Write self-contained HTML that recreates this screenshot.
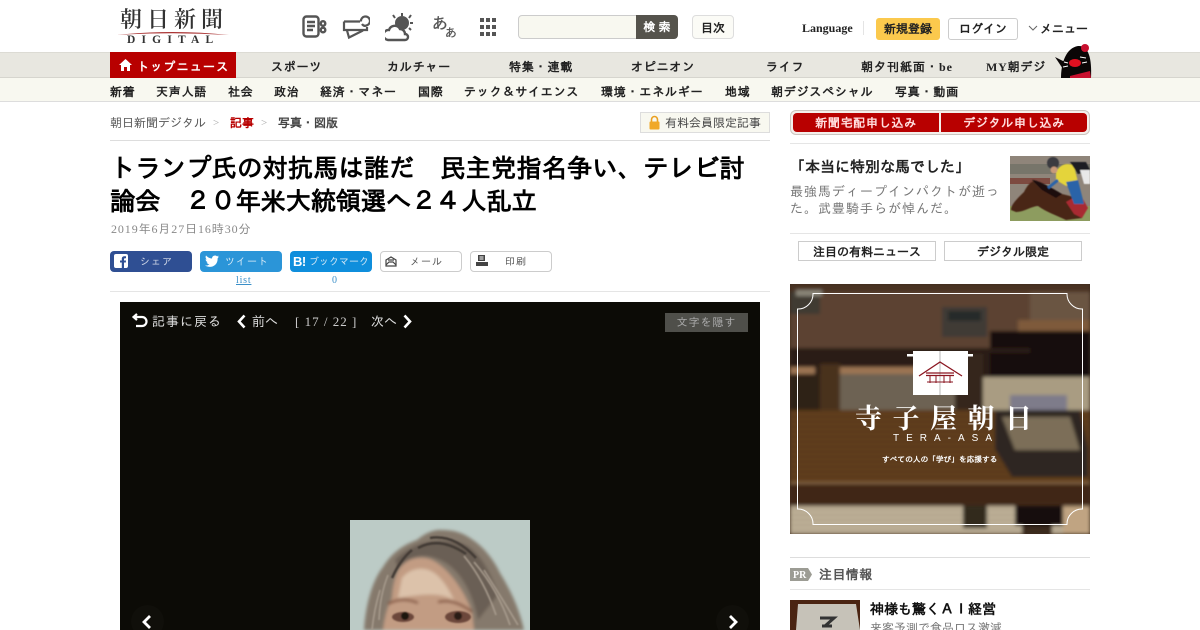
<!DOCTYPE html>
<html lang="ja"><head><meta charset="utf-8"><title>朝日新聞デジタル</title>
<style>
*{margin:0;padding:0;box-sizing:border-box}
html,body{width:1200px;height:630px;overflow:hidden;background:#fff}
body{position:relative;font-family:"Liberation Serif","IPAGothic",serif;color:#222}
.a{position:absolute;white-space:nowrap}
.n{font-size:12px;font-weight:bold;letter-spacing:.8px;color:#222;line-height:14px}
.s{position:absolute;height:21px;border-radius:4px;font-size:10px;line-height:21px;white-space:nowrap;letter-spacing:1px}
.s span{top:1px}
svg{position:absolute;display:block}
</style></head><body>

<!-- logo -->
<div class="a" style="left:120px;top:5px;font:600 22px/28px 'Noto Serif CJK SC',serif;letter-spacing:5px;color:#333">朝日新聞</div>
<svg style="left:116px;top:30px" width="114" height="6"><path d="M1 5Q57-1 113 5Q57 1.500 1 5Z" fill="#a33"/></svg>
<div class="a" style="left:127px;top:34px;font:bold 11.500px/12px 'Liberation Serif',serif;letter-spacing:6.200px;color:#333">DIGITAL</div>

<!-- icons -->
<svg style="left:302px;top:15px" width="26" height="24" fill="none" stroke="#555" stroke-width="2.400"><rect x="1.500" y="1.500" width="15" height="20" rx="3"/><path d="M5 7h8M5 11h8M5 15h6" /><circle cx="21" cy="8.500" r="2.300"/><circle cx="21" cy="15" r="2.300"/></svg>
<svg style="left:342px;top:15px" width="28" height="25" fill="none" stroke="#555" stroke-width="2.200"><path d="M2 6.500H18M25 12V15L2 15V6.500M19 6.500A4.500 4.500 0 1 1 25.500 10Q22 12 20 9"/><path d="M5 15.500l2 7 14-7"/></svg>
<svg style="left:385px;top:12px" width="30" height="30" fill="none" stroke="#555" stroke-width="2"><circle cx="17" cy="11" r="6" fill="#555"/><path d="M17 1v3M8 3l2 3M26 3l-2 3M28 11h-3M26 18l-2-2"/><path d="M3 28a5 5 0 0 1 1-10 6 6 0 0 1 11-1 5 5 0 0 1 5 5 3 3 0 0 1 0 6Z" fill="#fff" stroke-width="2.400"/></svg>
<div class="a" style="left:432px;top:15px;font-size:16px;line-height:20px;color:#555;-webkit-text-stroke:.3px #555">あ</div>
<div class="a" style="left:445px;top:26px;font-size:12px;line-height:14px;color:#555;-webkit-text-stroke:.3px #555">あ</div>
<svg style="left:480px;top:18px" width="16" height="18" fill="#555"><path d="M0 0h4v4H0zM6 0h4v4H6zM12 0h4v4h-4zM0 7h4v4H0zM6 7h4v4H6zM12 7h4v4h-4zM0 14h4v4H0zM6 14h4v4H6zM12 14h4v4h-4z"/></svg>

<!-- search -->
<div class="a" style="left:518px;top:15px;width:120px;height:24px;background:#f8f8f0;border:1px solid #ccc;border-radius:4px 0 0 4px"></div>
<div class="a" style="left:636px;top:15px;width:42px;height:24px;background:#55534c;border-radius:0 4px 4px 0;color:#fff;font-size:12px;font-weight:bold;line-height:24px;text-align:center;letter-spacing:3px;padding-left:3px">検索</div>
<div class="a" style="left:692px;top:15px;width:42px;height:24px;background:#fbfbf6;border:1px solid #ddd;border-radius:4px;font-size:12px;font-weight:bold;line-height:24px;text-align:center">目次</div>
<div class="a" style="left:802px;top:21px;font-size:12px;font-weight:bold;line-height:14px">Language</div>
<div class="a" style="left:863px;top:21px;width:1px;height:14px;background:#e4e4e4"></div>
<div class="a" style="left:876px;top:18px;width:64px;height:22px;background:#fbc94d;border-radius:3px;font-size:12px;font-weight:bold;line-height:23px;text-align:center">新規登録</div>
<div class="a" style="left:948px;top:18px;width:70px;height:22px;border:1px solid #ccc;border-radius:3px;font-size:12px;font-weight:bold;line-height:21px;text-align:center">ログイン</div>
<svg style="left:1028px;top:25px" width="10" height="7" fill="none" stroke="#666"><path d="M1 1l4 4 4-4"/></svg>
<div class="a" style="left:1040px;top:22px;font-size:12px;font-weight:bold;line-height:14px">メニュー</div>

<!-- nav 1 -->
<div class="a" style="left:0;top:52px;width:1200px;height:26px;background:#e8e7e0;border-top:1px solid #dcdbd4;border-bottom:1px solid #d6d5ce"></div>
<div class="a" style="left:110px;top:52px;width:126px;height:26px;background:#b80000"></div>
<svg style="left:119px;top:59px" width="13" height="12" fill="#fff"><path d="M6.500 0L13 6h-2v6H8V8H5v4H2V6H0Z"/></svg>
<div class="a n" style="left:137px;top:60px;color:#fff;letter-spacing:1.200px">トップニュース</div>
<div class="a n" style="left:271px;top:60px">スポーツ</div>
<div class="a n" style="left:387px;top:60px">カルチャー</div>
<div class="a n" style="left:509px;top:60px">特集・連載</div>
<div class="a n" style="left:631px;top:60px">オピニオン</div>
<div class="a n" style="left:766px;top:60px">ライフ</div>
<div class="a n" style="left:861px;top:60px;letter-spacing:1px">朝夕刊紙面・be</div>
<div class="a n" style="left:986px;top:60px;letter-spacing:.8px">MY朝デジ</div>
<svg style="left:1054px;top:43px" width="38" height="35"><path d="M7 35C7 20 12 5 24 3 34 2 38 14 37 35Z" fill="#0a0606"/><path d="M1 14l10 5-2 7z" fill="#0a0606"/><circle cx="31" cy="5" r="4" fill="#c8102e"/><ellipse cx="21" cy="20" rx="6" ry="4" fill="#e01020"/><path d="M16 33l20-5 1 7H16z" fill="#c8102e"/><path d="M26 14l6 1M10 19l4 1M28 20l5-1M9 24l5-1" stroke="#fff" stroke-width="1"/></svg>

<!-- nav 2 -->
<div class="a" style="left:0;top:78px;width:1200px;height:24px;background:#f8f8f0;border-bottom:1px solid #ddd"></div>
<div class="a n" style="left:110px;top:85px">新着</div>
<div class="a n" style="left:156px;top:85px">天声人語</div>
<div class="a n" style="left:228px;top:85px">社会</div>
<div class="a n" style="left:274px;top:85px">政治</div>
<div class="a n" style="left:320px;top:85px">経済・マネー</div>
<div class="a n" style="left:418px;top:85px">国際</div>
<div class="a n" style="left:464px;top:85px">テック＆サイエンス</div>
<div class="a n" style="left:601px;top:85px">環境・エネルギー</div>
<div class="a n" style="left:725px;top:85px">地域</div>
<div class="a n" style="left:771px;top:85px">朝デジスペシャル</div>
<div class="a n" style="left:895px;top:85px">写真・動画</div>

<!-- breadcrumbs -->
<div class="a" style="left:110px;top:115px;font-size:12px;line-height:16px;color:#555">朝日新聞デジタル</div>
<div class="a" style="left:213px;top:115px;font-size:11px;line-height:16px;color:#aaa">&gt;</div>
<div class="a" style="left:230px;top:115px;font-size:12px;line-height:16px;color:#b80000;font-weight:bold">記事</div>
<div class="a" style="left:261px;top:115px;font-size:11px;line-height:16px;color:#aaa">&gt;</div>
<div class="a" style="left:278px;top:115px;font-size:12px;line-height:16px;color:#444;font-weight:bold">写真・図版</div>
<div class="a" style="left:640px;top:112px;width:130px;height:21px;background:#f8f8f0;border:1px solid #ddd"></div>
<svg style="left:648px;top:115px" width="13" height="15"><path d="M3.500 7V4.500a3 3 0 0 1 6 0V7" fill="none" stroke="#eaa020" stroke-width="1.600"/><rect x="1.500" y="6.500" width="10" height="8" rx="1" fill="#f0a828"/></svg>
<div class="a" style="left:665px;top:115px;font-size:12px;line-height:16px;color:#444">有料会員限定記事</div>
<div class="a" style="left:110px;top:140px;width:660px;height:1px;background:#ddd"></div>

<!-- title -->
<div class="a" style="left:110px;top:153px;width:660px;font:bold 25.400px/33px 'Liberation Sans','IPAGothic',sans-serif;color:#000;white-space:nowrap">トランプ氏の対抗馬は誰だ　民主党指名争い、テレビ討<br><span style="letter-spacing:-.3px">論会　２０年米大統領選へ２４人乱立</span></div>
<div class="a" style="left:111px;top:221px;font-size:12px;line-height:16px;color:#888;letter-spacing:.9px">2019年6月27日16時30分</div>

<!-- share -->
<div class="s" style="left:110px;top:251px;width:82px;background:#2f4f93;color:#cfd6e6"><span class="a" style="left:30px">シェア</span></div>
<svg style="left:114px;top:254px" width="15" height="15"><rect width="14" height="14" rx="2" fill="#fff"/><path d="M10 14V8.500h1.800L12 6.500H10V5.200c0-.6.300-1 1-1h1V2.300H10.400C8.500 2.300 7.800 3.500 7.800 5V6.500H6V8.500H7.800V14Z" fill="#2f4f93"/></svg>
<div class="s" style="left:200px;top:251px;width:82px;background:#2b95d8;color:#d5e8f5"><span class="a" style="left:25px">ツイート</span></div>
<svg style="left:205px;top:255px" width="14" height="12"><path d="M14 1.500l-1.600.4 1.200-1.400-1.700.7A3 3 0 0 0 7 3.500C4.500 3.400 2.500 2.200 1 .5c-.8 1.400-.4 3 .9 4L.6 4.200c0 1.500 1 2.600 2.400 3l-1.300 0C2.100 8.400 3.200 9.200 4.500 9.200A6 6 0 0 1 0 10.500C6 14 13 10.500 12.600 3.400Z" fill="#fff"/></svg>
<div class="a" style="left:236px;top:275px;font-size:10px;line-height:12px;color:#3a8fc8;text-decoration:underline;letter-spacing:.8px">list</div>
<div class="s" style="left:290px;top:251px;width:82px;background:#0f8edc;color:#d5e8f5"><span class="a" style="left:19px;letter-spacing:0">ブックマーク</span></div>
<div class="a" style="left:293px;top:255px;font:bold 13px/13px 'Liberation Sans',sans-serif;color:#fff;letter-spacing:-.5px">B!</div>
<div class="a" style="left:332px;top:275px;font-size:10px;line-height:12px;color:#3a8fc8">0</div>
<div class="s" style="left:380px;top:251px;width:82px;background:#fff;border:1px solid #ccc;color:#555"><span class="a" style="left:29px;top:0">メール</span></div>
<svg style="left:385px;top:256px" width="12" height="11" fill="#fff" stroke="#444" stroke-width="1.200"><path d="M1 4L6 1l5 3v6H1Z"/><path d="M1 9l3-3h4l3 3M3 4h6"/></svg>
<div class="s" style="left:470px;top:251px;width:82px;background:#fff;border:1px solid #ccc;color:#555"><span class="a" style="left:34px;top:0">印刷</span></div>
<svg style="left:476px;top:255px" width="12" height="12" fill="#444"><path d="M2 0h7v6H2z"/><path d="M0 7h12v4H0z"/><path d="M3.500 1.500h4v1h-4zM3.500 3.500h4v1h-4z" fill="#fff"/></svg>
<div class="a" style="left:110px;top:291px;width:660px;height:1px;background:#e5e5e5"></div>

<!-- photo panel -->
<div class="a" style="left:120px;top:302px;width:640px;height:328px;background:#0c0b06"></div>
<svg style="left:132px;top:313px" width="16" height="15" fill="none" stroke="#fff" stroke-width="2.200"><path d="M5 1L1.500 4 5 7M2 4h8a4 4 0 0 1 0 9H4"/></svg>
<div class="a" style="left:152px;top:313px;font-size:13px;line-height:17px;color:#ddd;letter-spacing:1px">記事に戻る</div>
<svg style="left:236px;top:314px" width="11" height="15" fill="none" stroke="#fff" stroke-width="2.600"><path d="M8.500 1.500L3 7.500l5.500 6"/></svg>
<div class="a" style="left:252px;top:313px;font-size:13px;line-height:17px;color:#ddd">前へ</div>
<div class="a" style="left:295px;top:313px;font-size:13px;line-height:17px;color:#ccc;letter-spacing:1px">[ 17 / 22 ]</div>
<div class="a" style="left:371px;top:313px;font-size:13px;line-height:17px;color:#ddd">次へ</div>
<svg style="left:402px;top:314px" width="11" height="15" fill="none" stroke="#fff" stroke-width="2.600"><path d="M2.500 1.500L8 7.500l-5.500 6"/></svg>
<div class="a" style="left:665px;top:313px;width:83px;height:19px;background:#4f4f4a;color:#aaa;font-size:11px;line-height:20px;text-align:center;letter-spacing:1px">文字を隠す</div>

<!-- portrait -->
<svg style="left:350px;top:520px" width="180" height="110" viewBox="0 0 180 110">
<defs><filter id="b1"><feGaussianBlur stdDeviation="1.500"/></filter><filter id="b2"><feGaussianBlur stdDeviation=".7"/></filter></defs>
<rect width="180" height="110" fill="#bccbc6"/>
<g filter="url(#b1)">
<path d="M14 110C16 80 24 58 33 47 42 32 55 24 67 20 75 13 85 9 92 10 108 10 116 15 123 20 135 28 145 42 150 53 163 74 170 92 174 110Z" fill="#85796c"/>
<path d="M45 40C62 22 92 14 118 26 132 36 142 55 148 75L128 100C122 70 108 45 85 38 70 33 58 38 48 48Z" fill="#6a5f54"/>
<path d="M33 110C35 95 38 85 42 78 43 60 48 48 55 43 62 37 75 36 84 41 100 50 115 72 122 92L124 110Z" fill="#c29c83"/>
<path d="M52 58C62 46 78 46 88 56 96 64 100 72 104 80 90 72 72 74 48 78Z" fill="#dcc2aa"/>
<path d="M38 84Q52 76 68 83M88 82Q104 78 122 92" stroke="#84553f" stroke-width="2.500" fill="none"/>
</g>
<g filter="url(#b2)">
<ellipse cx="53" cy="97" rx="11" ry="5" fill="#6c473a"/><circle cx="55" cy="96" r="4" fill="#1d120e"/>
<ellipse cx="108" cy="97" rx="13" ry="6" fill="#6c473a"/><circle cx="108" cy="96" r="4" fill="#2a1a14"/>
<path d="M68 28Q90 16 116 34M62 30Q50 40 42 58M80 18Q104 14 126 38" stroke="#423a34" stroke-width="2.500" fill="none"/>
<path d="M124 42Q148 70 160 105M134 50Q150 75 168 105M114 36Q134 60 146 95" stroke="#a89c8e" stroke-width="1.600" fill="none"/>
<path d="M30 70Q24 90 22 110M38 55Q30 75 29 100" stroke="#a89c8e" stroke-width="1.500" fill="none"/>
</g>
</svg>

<!-- arrows -->
<div class="a" style="left:131px;top:605px;width:33px;height:33px;border-radius:50%;background:#100f0a"></div>
<svg style="left:141px;top:614px" width="12" height="16" fill="none" stroke="#fff" stroke-width="2.800"><path d="M9 2L3 8l6 6"/></svg>
<div class="a" style="left:716px;top:605px;width:33px;height:33px;border-radius:50%;background:#100f0a"></div>
<svg style="left:727px;top:614px" width="12" height="16" fill="none" stroke="#fff" stroke-width="2.800"><path d="M3 2l6 6-6 6"/></svg>

<!-- sidebar -->
<div class="a" style="left:790px;top:110px;width:300px;height:25px;background:#f4eeea;border:1px solid #ccc4be;border-radius:6px"></div>
<div class="a" style="left:793px;top:113px;width:146px;height:19px;background:#b80000;border-radius:4px 0 0 4px;color:#fdd;font-size:12px;font-weight:bold;line-height:21px;text-align:center;letter-spacing:.7px">新聞宅配申し込み</div>
<div class="a" style="left:941px;top:113px;width:146px;height:19px;background:#b80000;border-radius:0 4px 4px 0;color:#fdd;font-size:12px;font-weight:bold;line-height:21px;text-align:center;letter-spacing:.7px">デジタル申し込み</div>
<div class="a" style="left:790px;top:143px;width:300px;height:1px;background:#e5e5e5"></div>
<div class="a" style="left:790px;top:158px;font:bold 15px/20px 'Liberation Sans','IPAGothic',sans-serif;color:#222">「本当に特別な馬でした」</div>
<div class="a" style="left:790px;top:183px;font-size:13px;line-height:17px;color:#777;letter-spacing:1px">最強馬ディープインパクトが逝っ<br>た。武豊騎手らが悼んだ。</div>
<svg style="left:1010px;top:156px" width="80" height="65" viewBox="0 0 80 65">
<defs><filter id="b3"><feGaussianBlur stdDeviation=".6"/></filter></defs>
<rect width="80" height="65" fill="#8f857a"/><rect y="8" width="80" height="10" fill="#77756a"/><rect y="22" width="40" height="6" fill="#7d4a40"/><rect y="50" width="80" height="15" fill="#8d9c5f"/>
<g filter="url(#b3)">
<path d="M1 54C1 48 8 42 14 36 18 28 22 24 26 26 36 30 44 34 52 38L68 42 72 62 56 64C48 60 36 56 28 50 22 50 14 56 6 56Z" fill="#4a2618"/>
<path d="M22 24C28 24 42 32 52 38L46 42 32 34Z" fill="#1a100c"/>
<path d="M56 46L70 38 78 52 72 62 64 58Z" fill="#a82c30"/>
<path d="M46 16C50 8 58 6 64 10L68 26 56 30 46 24Z" fill="#e4d43a"/>
<path d="M60 6L76 6 80 14 68 18Z" fill="#1c1c22"/><path d="M70 14L80 14V28L74 28Z" fill="#e8e8e8"/>
<path d="M56 26L68 24 74 48 64 48Z" fill="#2c64a8"/>
<circle cx="43" cy="7" r="6" fill="#3a3a40"/><circle cx="44" cy="14" r="3.500" fill="#c89a7a"/>
<path d="M48 24L38 32" stroke="#2c64a8" stroke-width="3"/>
</g></svg>
<div class="a" style="left:790px;top:233px;width:300px;height:1px;background:#e5e5e5"></div>
<div class="a" style="left:798px;top:241px;width:138px;height:20px;border:1px solid #ccc;font:bold 12px/20px 'Liberation Sans','IPAGothic',sans-serif;text-align:center;color:#222">注目の有料ニュース</div>
<div class="a" style="left:944px;top:241px;width:138px;height:20px;border:1px solid #ccc;font:bold 12px/20px 'Liberation Sans','IPAGothic',sans-serif;text-align:center;color:#222">デジタル限定</div>

<!-- banner -->
<svg style="left:790px;top:284px" width="300" height="250" viewBox="0 0 300 250">
<defs><filter id="b4"><feGaussianBlur stdDeviation="1.800"/></filter>
<pattern id="wd" width="300" height="5" patternUnits="userSpaceOnUse"><rect width="300" height="5" fill="#64401f"/><rect y="2" width="300" height="1.500" fill="#4f3118"/></pattern>
<pattern id="tm" width="10" height="5" patternUnits="userSpaceOnUse"><rect width="10" height="5" fill="#c6b89e"/><rect width="10" height="2" fill="#a1957f"/></pattern></defs>
<rect width="300" height="250" fill="#3e2c1e"/>
<g filter="url(#b4)">
<rect width="300" height="10" fill="#4a3020"/>
<rect x="0" y="8" width="240" height="58" fill="#5c4330"/>
<rect x="240" y="8" width="60" height="32" fill="#6b5442"/>
<rect x="228" y="36" width="72" height="11" fill="#7e5a3a"/>
<rect x="200" y="47" width="100" height="46" fill="#150d08"/>
<rect x="0" y="64" width="240" height="5" fill="#2c1e14"/>
<rect x="0" y="69" width="200" height="24" fill="#2a1c12"/>
<rect x="0" y="83" width="25" height="7" fill="#9c7452"/><rect x="46" y="83" width="120" height="7" fill="#9c7452"/>
<rect x="50" y="90" width="120" height="36" fill="#6d6252"/>
<rect x="190" y="93" width="110" height="33" fill="#a99c82"/>
<rect x="30" y="80" width="20" height="46" fill="#48301f"/>
<rect x="0" y="90" width="30" height="36" fill="#2d2015"/>
<rect x="165" y="70" width="28" height="56" fill="#35251a"/>
<rect x="0" y="126" width="300" height="74" fill="url(#wd)"/>
<rect x="0" y="198" width="300" height="2" fill="#8a6a46"/>
<rect x="0" y="200" width="300" height="21" fill="#3f2818"/>
<rect x="0" y="222" width="300" height="28" fill="url(#tm)"/>
<rect x="173" y="222" width="24" height="22" fill="#33291f"/>
<rect x="225" y="222" width="48" height="20" fill="#17100b"/><rect x="232" y="242" width="30" height="8" fill="#3b2a1c"/>
<rect x="273" y="222" width="27" height="28" fill="#c0a482"/>
<rect x="152" y="23" width="45" height="30" fill="#3f3b35"/><rect x="158" y="27" width="33" height="10" fill="#262a2c"/>
<rect x="0" y="8" width="30" height="22" fill="#3f3a32"/><rect x="6" y="6" width="26" height="6" fill="#8a8578"/>
<path d="M205 126H290L298 165 298 193H222L205 165Z" fill="#2e2620"/>
<rect x="220" y="111" width="57" height="15" fill="#7e7c8a"/>
<path d="M212 133H280L290 166H225Z" fill="#7c6e58"/>
</g>
<path d="M23 9.500H277A15 15 0 0 0 292.500 25V225A15 15 0 0 0 277 240.500H23A15 15 0 0 0 7.500 225V25A15 15 0 0 0 23 9.500Z" fill="none" stroke="#fff" stroke-width="1"/>
<rect x="123" y="67" width="55" height="44" fill="#fff"/>
<rect x="117" y="70" width="66" height="2.500" fill="#fff"/>
<path d="M150 67v44" stroke="#888" stroke-width=".6"/>
<path d="M129 92L150 78 172 92M136 89H164M136 91.500H164" fill="none" stroke="#8a1520" stroke-width="1.300"/>
<path d="M140 92v7M146 92v7M154 92v7M160 92v7M137 98H163" fill="none" stroke="#8a1520" stroke-width="1"/>
<text x="65" y="144" font-family="'Noto Serif CJK SC',serif" font-size="27" font-weight="700" fill="#fff" letter-spacing="10.500">寺子屋朝日</text>
<text x="103" y="157" font-family="'Liberation Sans',sans-serif" font-size="10" fill="#fff" letter-spacing="7">TERA-ASA</text>
<text x="92" y="178" font-family="'IPAGothic',sans-serif" font-size="7.700" font-weight="bold" fill="#fff">すべての人の「学び」を応援する</text>
</svg>

<!-- PR -->
<div class="a" style="left:790px;top:557px;width:300px;height:1px;background:#ddd"></div>
<svg style="left:790px;top:568px" width="23" height="13"><path d="M0 0H18L22 6.500 18 13H0Z" fill="#9c9c94"/><text x="3" y="10" font-family="'Liberation Serif',serif" font-size="10" font-weight="bold" fill="#fff">PR</text></svg>
<div class="a" style="left:819px;top:566px;font-size:13px;font-weight:bold;line-height:17px;color:#555;letter-spacing:.4px">注目情報</div>
<div class="a" style="left:790px;top:589px;width:300px;height:1px;background:#e5e5e5"></div>
<svg style="left:790px;top:600px" width="70" height="30"><rect width="70" height="30" fill="#4a2412"/><path d="M8 4H66L70 30H6Z" fill="#c6c2b8"/><path d="M30 18h14l-9 8M32 26h10" stroke="#333" stroke-width="3" fill="none"/></svg>
<div class="a" style="left:870px;top:600px;font:bold 14px/18px 'Liberation Sans','IPAGothic',sans-serif;color:#111">神様も驚くＡＩ経営</div>
<div class="a" style="left:870px;top:620px;font-size:12px;line-height:16px;color:#777">来客予測で食品ロス激減</div>
</body></html>
